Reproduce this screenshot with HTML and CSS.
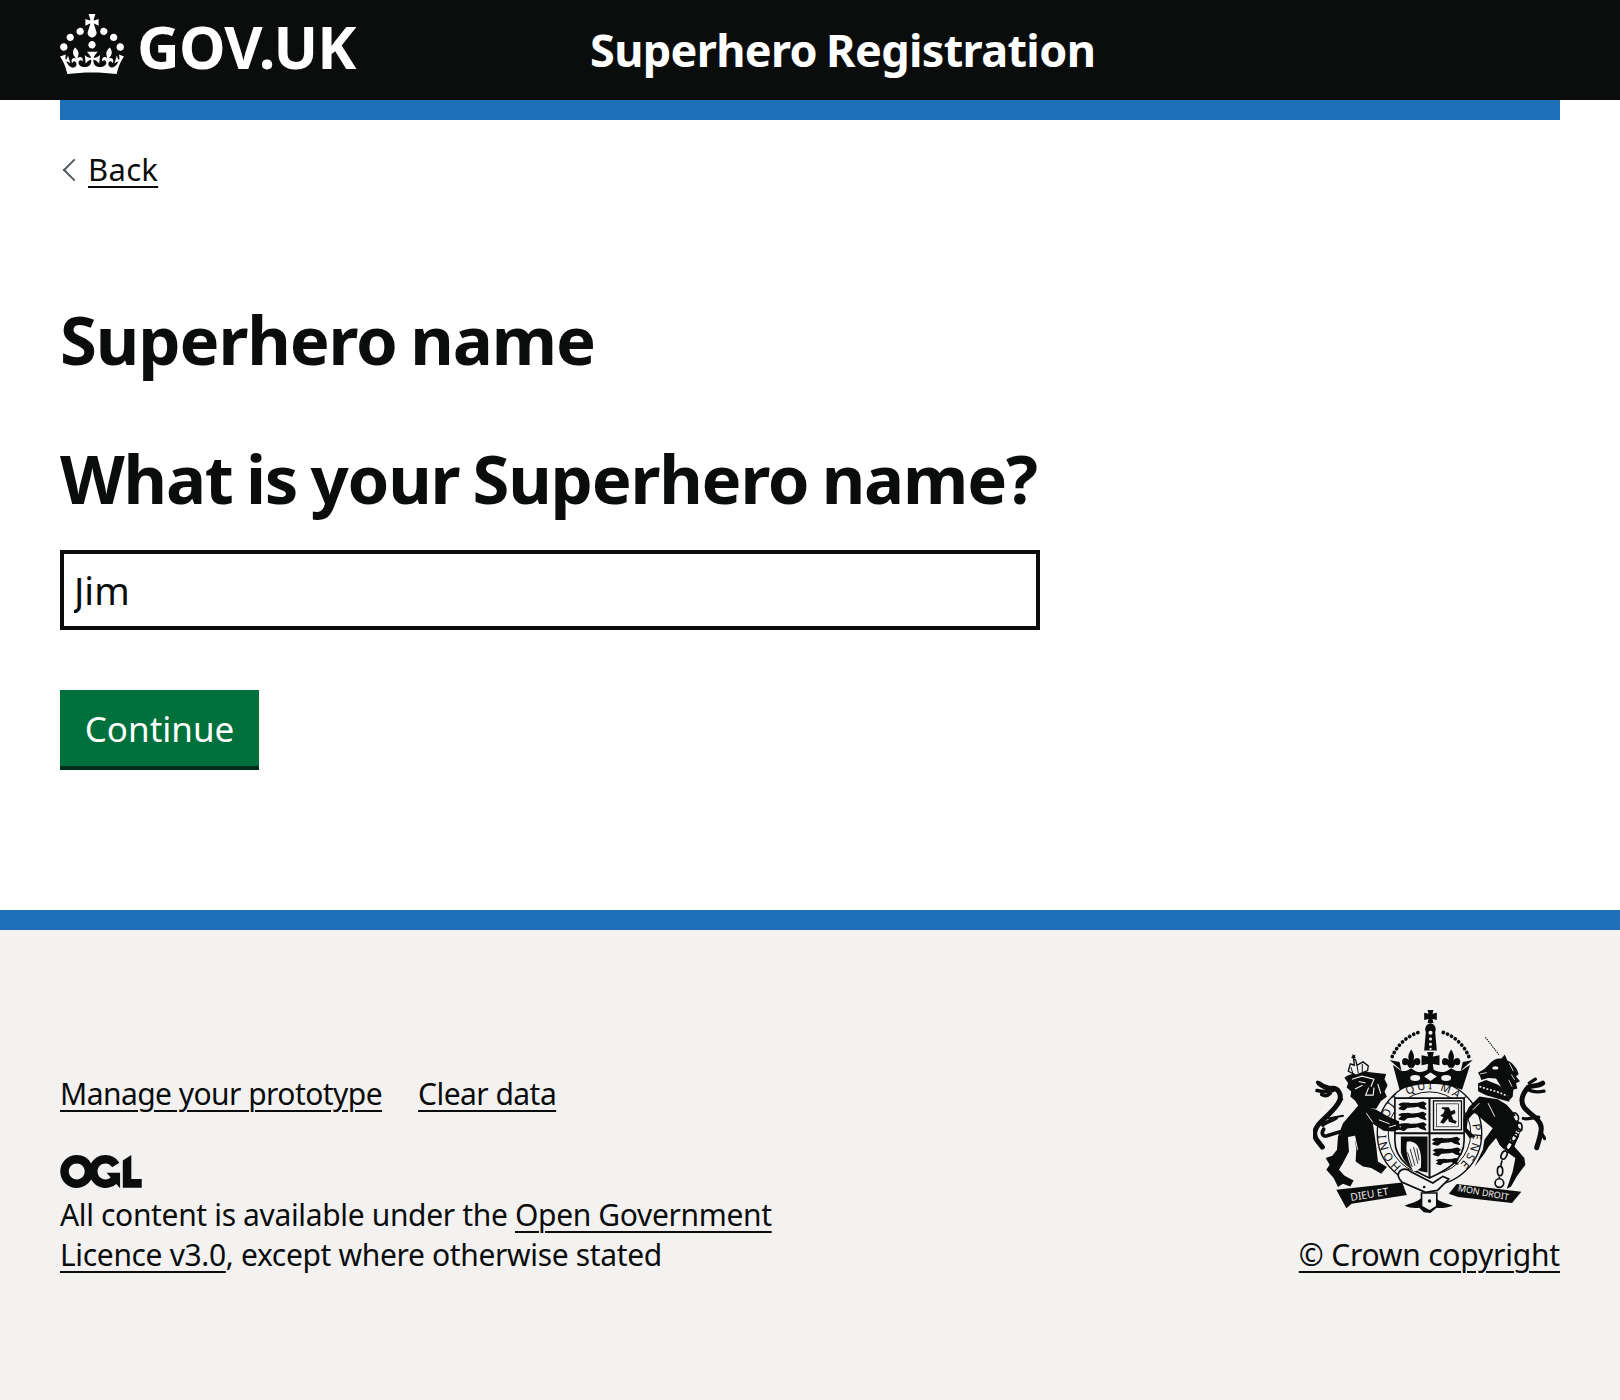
FILE: index.html
```html
<!DOCTYPE html>
<html lang="en">
<head>
<meta charset="utf-8">
<title>Superhero name</title>
<link rel="stylesheet" href="styles.css">
</head>
<body>
<header class="header">
  <div class="header-inner">
    <a class="logo" href="#">
      <svg class="crown" viewBox="0 0 32 30" aria-hidden="true"><path fill="currentColor" d="M22.6 10.4c-1 .4-2-.1-2.4-1-.4-.9.1-2 1-2.4.9-.4 2 .1 2.4 1s-.1 2-1 2.4m-5.9 6.7c-.9.4-2-.1-2.4-1-.4-.9.1-2 1-2.4.9-.4 2 .1 2.4 1s-.1 2-1 2.4m10.8-3.7c-1 .4-2-.1-2.4-1-.4-.9.1-2 1-2.4.9-.4 2 0 2.4 1s0 2-1 2.4m3.3 4.8c-1 .4-2-.1-2.4-1-.4-.9.1-2 1-2.4.9-.4 2-.1 2.4 1 .4 1 0 2-1 2.4M17 4.7l2.3 1.2V2.5l-2.3.7-.2-.2.9-3h-3.4l.9 3-.2.2c-.1.1-2.3-.7-2.3-.7v3.4L15 4.7c.1.1.1.2.2.2l-1.3 4c-.1.2-.1.4-.1.6 0 1.1.8 2 1.9 2.2h.7c1-.2 1.9-1.1 1.9-2.2 0-.2 0-.4-.1-.6l-1.3-4c-.1-.1 0-.2.1-.2m-7.6 5.7c.9.4 2-.1 2.4-1 .4-.9-.1-2-1-2.4-.9-.4-2 .1-2.4 1s0 2 1 2.4m-5 3c.9.4 2-.1 2.4-1 .4-.9-.1-2-1-2.4-.9-.4-2 .1-2.4 1s.1 2 1 2.4m-3.2 4.8c.9.4 2-.1 2.4-1 .4-.9-.1-2-1-2.4-.9-.4-2 .1-2.4 1s0 2 1 2.4m14.8 11c4.4 0 8.6.3 12.3.8 1.1-4.5 2.4-7 3.7-8.8l-2.5-.9c.2 1.3.3 1.9 0 2.7-.4-.4-.8-1.1-1.1-2.3l-1.2 4c.7-.5 1.3-.8 2-.9-1.1 2.5-2.6 3.1-3.5 3-1.1-.2-1.7-1.2-1.5-2.1.3-1.2 1.5-1.5 2.1-.1 1.1-2.3-.8-3-2-2.3 1.9-1.9 2.1-3.5.6-5.6-2.1 1.6-2.1 3.2-1.2 5.5-1.2-1.4-3.2-.6-2.5 1.6.9-1.4 2.1-.5 1.9.8-.2 1.1-1.7 2.1-3.5 1.9-2.7-.2-2.9-2.1-2.9-3.6.7-.1 1.9.5 2.9 1.9l.4-4.3c-1.1 1.1-2.1 1.4-3.2 1.4.4-1.2 2.1-3 2.1-3h-5.4s1.7 1.9 2.1 3c-1.1 0-2.1-.2-3.2-1.4l.4 4.3c1-1.4 2.2-2 2.9-1.9-.1 1.5-.2 3.4-2.9 3.6-1.9.2-3.4-.8-3.5-1.9-.2-1.3 1-2.2 1.9-.8.7-2.3-1.2-3-2.5-1.6.9-2.2.9-3.9-1.2-5.5-1.5 2-1.3 3.7.6 5.6-1.2-.7-3.1 0-2 2.3.6-1.4 1.8-1.1 2.1.1.2.9-.3 1.9-1.5 2.1-.9.2-2.4-.5-3.5-3 .6 0 1.2.3 2 .9l-1.2-4c-.3 1.1-.7 1.9-1.1 2.3-.3-.8-.2-1.4 0-2.7l-2.9.9C1.3 23 2.6 25.5 3.7 30c3.7-.5 7.9-.8 12.3-.8"/></svg>
      <span class="logo-text">GOV.UK</span>
    </a>
    <a class="service" href="#">Superhero Registration</a>
  </div>
</header>
<div class="container">
  <div class="rule"></div>
  <a class="back" href="#"><span class="back-text">Back</span></a>
  <main class="main">
    <h1 class="title">Superhero name</h1>
    <label class="label" for="name">What is your Superhero name?</label>
    <input class="input" id="name" type="text" value="Jim">
    <button class="button" type="button">Continue</button>
  </main>
</div>
<footer class="footer">
  <div class="footer-inner">
    <div class="footer-meta">
      <ul class="footer-links">
        <li><a href="#">Manage your prototype</a></li>
        <li><a href="#">Clear data</a></li>
      </ul>
      <svg class="ogl" viewBox="0 0 483.2 195.7" aria-hidden="true"><path fill="currentColor" d="M421.5 142.8V.1l-50.7 32.3v161.1h112.4v-50.7zm-122.3-9.6A47.12 47.12 0 0 1 221 97.8c0-26 21.1-47.1 47.1-47.1 16.7 0 31.4 8.7 39.7 21.8l42.7-27.2A97.63 97.63 0 0 0 268.1 0c-36.5 0-68.3 20.1-85.1 49.7A98 98 0 0 0 97.8 0C43.9 0 0 43.9 0 97.8s43.9 97.8 97.8 97.8c36.5 0 68.3-20.1 85.1-49.7a97.76 97.76 0 0 0 149.6 25.4l19.4 22.2h3v-87.8h-80l24.3 27.5zM97.8 145c-26 0-47.1-21.1-47.1-47.1s21.1-47.1 47.1-47.1 47.2 21 47.2 47S123.8 145 97.8 145"/></svg>
      <p class="licence">All content is available under the <a href="#">Open Government Licence v3.0</a>, except where otherwise stated</p>
    </div>
    <div class="footer-crest">
      <svg class="crest" viewBox="70 60 700 610" aria-hidden="true">
        <defs>
          <path id="fleur" d="M0-30C8-18 8-10 5-4 12-12 22-12 22 0 22 8 14 10 10 6L5 14H-5L-10 6C-14 10-22 8-22 0-22-12-12-12-5-4-8-10-8-18 0-30Z"/>
          <path id="lion-passant" stroke="#0b0c0c" stroke-width="4" stroke-linejoin="round" d="M0 10C10 3 20 8 26 6 40 10 60 6 72 3L80 8 74 14 80 24 66 20 56 14C44 18 34 16 24 18L14 26 0 22 10 14Z"/>
          <path id="garter-ring" d="M336 530A131 131 0 1 1 504 530"/>
          <path id="ribbon-l" d="M184 634L334 610"/>
          <path id="ribbon-r" d="M504 604L668 634"/>
        </defs>

        <!-- garter -->
        <circle cx="420" cy="430" r="157" fill="#f3f2f1" stroke="#0b0c0c" stroke-width="4"/>
        <circle cx="420" cy="430" r="124" fill="none" stroke="#0b0c0c" stroke-width="3"/>
        <text class="crest-motto" font-size="34"><textPath href="#garter-ring" textLength="630" lengthAdjust="spacing">HONI SOIT QUI MAL Y PENSE</textPath></text>

        <!-- royal crown -->
        <g transform="translate(270 30)" fill="#0b0c0c">
          <path d="M144 29h18l-3 12 13-3v22l-13-3 3 12h-18l3-12-13 3V38l13 3z"/>
          <path d="M134 152l5-56c-6-10 3-26 14-26s20 16 14 26l5 56z"/>
          <g fill="#f3f2f1">
            <circle cx="153" cy="98" r="6"/><circle cx="153" cy="117" r="4.5"/><circle cx="153" cy="133" r="4.5"/><circle cx="153" cy="147" r="3.5"/>
          </g>
          <path d="M38 170C52 136 85 105 122 96M268 170C255 136 222 105 186 96" fill="none" stroke="#0b0c0c" stroke-width="11" stroke-linecap="round" stroke-dasharray="0.5 13"/>
          <use href="#fleur" transform="translate(95 186) scale(1.25)"/>
          <use href="#fleur" transform="translate(215 186) scale(1.25)"/>
          <path d="M143 156h20l-3 14 20-4v30l-20-4 3 22h-20l3-22-20 4v-30l20 4z"/>
          <path d="M30 180l30 6 6 26zM280 180l-30 6-6 26z"/>
          <path d="M40 195C60 205 65 225 95 205 120 225 130 215 153 205 175 215 190 225 215 205 245 225 250 205 272 195L248 270C195 246 115 246 60 270Z"/>
          <g fill="#f3f2f1">
            <ellipse cx="107" cy="234" rx="15" ry="9"/>
            <path d="M153 218l19 12-19 13-19-13z"/>
            <ellipse cx="200" cy="234" rx="15" ry="9"/>
          </g>
        </g>

        <!-- shield -->
        <path d="M316 325h208v128c0 62-60 92-104 112-44-20-104-50-104-112z" fill="#f3f2f1" stroke="#0b0c0c" stroke-width="5"/>
        <path d="M420 325v240M316 430h208" stroke="#0b0c0c" stroke-width="6"/>
        <g fill="#0b0c0c">
          <use href="#lion-passant" transform="translate(329 334)"/>
          <use href="#lion-passant" transform="translate(329 365)"/>
          <use href="#lion-passant" transform="translate(329 396)"/>
          <use href="#lion-passant" transform="translate(430 440)"/>
          <use href="#lion-passant" transform="translate(432 472)"/>
          <use href="#lion-passant" transform="scale(.8) translate(552 630)"/>
          <path d="M334 440h80v108c-30-4-68-16-80-60z"/>
        </g>
        <path d="M352 456c28-6 48 18 42 78-8 6-12 10-22 12-12-22-26-56-20-90z" fill="#f3f2f1"/>
        <path d="M362 478l14 50M372 472l13 50M354 488l14 44M382 476l7 36" stroke="#0b0c0c" stroke-width="2.5"/>
        <rect x="432" y="333" width="84" height="87" fill="#f3f2f1" stroke="#0b0c0c" stroke-width="4"/>
        <rect x="441" y="342" width="66" height="69" fill="none" stroke="#0b0c0c" stroke-width="2"/>
        <path d="M458 352h20l6 12 12-4 2 10-12 6 6 14 10 4-4 8-20-6-2-10-14 16-10-4 10-16-10-4 10-8 4-10-10-4z" fill="#0b0c0c"/>

        <!-- lion -->
        <g transform="translate(60 180)">
          <g fill="none" stroke="#0b0c0c" stroke-linecap="round" stroke-linejoin="round">
            <path d="M30 102C42 112 52 114 64 116 86 112 96 134 90 152 80 176 52 198 30 220 12 240 10 258 24 274L38 292" stroke-width="15"/>
            <path d="M24 98L46 112M22 122C40 126 52 126 70 122M36 134C46 140 54 138 62 130M80 204C64 216 46 216 40 226M42 238C34 250 38 262 52 258 64 254 76 250 92 246" stroke-width="11"/>
            <path d="M98 148L64 188M100 198L56 206" stroke-width="6"/>
          </g>
          <path fill="#0b0c0c" d="M148 165L200 180 235 200 268 214 272 238 250 245 222 243 190 222 200 290 205 335 232 352 215 372 185 355 160 350 138 335 140 300 135 258 115 262 118 305 100 340 88 360 105 378 132 392 122 410 100 402 85 412 72 385 50 360 60 345 48 325 68 318 82 300 85 260 100 220Z"/>
          <g transform="translate(168 120) scale(1.14) translate(-168 -120)">
            <path fill="#0b0c0c" d="M112 88C130 74 150 76 168 72L222 78 218 92 226 108 218 124 224 138 208 150 196 170 170 168 150 164 140 148 128 138 130 124 118 114 122 102Z"/>
            <path fill="none" stroke="#f3f2f1" stroke-width="3" d="M132 92L158 84 190 92 182 112M150 98L168 102M176 114L168 134 188 134 190 114M140 118L160 108M200 104L208 130"/>
          </g>
          <path fill="none" stroke="#f3f2f1" stroke-width="3" d="M170 190L190 218M208 210L240 222M238 232L260 226M135 258L144 300"/>
          <path fill="#f3f2f1" stroke="#0b0c0c" stroke-width="4" d="M116 64L122 42 134 46 132 28 138 30 142 46 160 36 176 48 174 62 140 76Z"/>
          <path fill="#0b0c0c" d="M129 12l4 4 4-2-1 6 3 4-6 2-1 6-3-7-5-2 4-4z"/>
          <path fill="none" stroke="#0b0c0c" stroke-width="3" d="M142 46L146 70M158 42L158 68M124 52L130 72"/>
        </g>

        <!-- unicorn -->
        <g transform="translate(420 120)">
          <path d="M168 22L208 74" fill="none" stroke="#0b0c0c" stroke-width="3.5" stroke-dasharray="4 3"/>
          <path fill="#0b0c0c" d="M146 128C160 122 172 112 182 100 192 88 204 84 216 86L226 74 234 92C246 96 262 112 268 132L260 140 272 154 260 160 264 176 252 180 250 200 240 212 236 186 216 172 200 146 176 144 156 150 152 140Z"/>
          <ellipse cx="198" cy="114" rx="9" ry="5" fill="#f3f2f1"/>
          <path d="M152 132L172 128" stroke="#f3f2f1" stroke-width="2.5"/>
          <g fill="none" stroke="#f3f2f1" stroke-width="2.5"><path d="M240 100L252 124M246 134L256 150M238 150L248 170"/></g>
          <path fill="#0b0c0c" d="M146 160L170 150 204 164 238 184 240 216 204 206 170 196 146 184Z"/>
          <path fill="none" stroke="#f3f2f1" stroke-width="5" stroke-dasharray="6 5" d="M150 170L176 178 204 186 234 198"/>
          <path fill="#0b0c0c" d="M118 232L150 200 205 208 232 225 258 255 278 290 268 320 255 350 285 385 288 405 262 440 245 470 232 478 250 425 258 385 230 365 210 345 200 325 178 350 165 372 135 412 160 360 165 330 190 295 160 270 135 248 115 270 112 295 138 322 120 325 102 300 102 265Z"/>
          <path fill="none" stroke="#f3f2f1" stroke-width="3" d="M176 220L196 260M150 220L130 240"/>
          <g fill="none" stroke="#0b0c0c" stroke-linecap="round" stroke-linejoin="round">
            <path d="M340 160C326 170 310 166 296 172 282 190 270 210 284 232 300 254 336 268 336 296 334 320 326 340 322 354" stroke-width="15"/>
            <path d="M344 184C324 188 306 186 294 178M282 266C296 270 310 262 328 262M334 306L346 326M300 160L318 148" stroke-width="10"/>
          </g>
          <g fill="none" stroke="#f3f2f1" stroke-width="11">
            <path d="M258 258L274 292 255 322 226 368" stroke-dasharray="18 6"/>
          </g>
          <g fill="none" stroke="#0b0c0c" stroke-width="5">
            <ellipse cx="258" cy="262" rx="9" ry="13" transform="rotate(-20 258 262)"/>
            <ellipse cx="270" cy="292" rx="8" ry="13"/>
            <ellipse cx="256" cy="322" rx="8" ry="13" transform="rotate(30 256 322)"/>
            <ellipse cx="240" cy="348" rx="8" ry="13" transform="rotate(30 240 348)"/>
            <ellipse cx="224" cy="376" rx="8" ry="13" transform="rotate(25 224 376)"/>
            <ellipse cx="212" cy="424" rx="8" ry="14"/>
            <circle cx="210" cy="460" r="13"/>
            <path d="M218 392L214 408M210 440L210 446"/>
          </g>
        </g>

        <!-- motto -->
        <path d="M140 600L338 578 352 616 186 642 170 656Z" fill="#0b0c0c"/>
        <path d="M502 583L696 606 668 640 506 622 478 612Z" fill="#0b0c0c"/>
        <path d="M345 648C365 640 381 638 395 626H437C451 636 471 642 491 648 467 656 455 656 441 654L423 670 403 668 389 654C373 656 359 654 345 648Z" fill="#0b0c0c"/>
        <path d="M396 610H442V650L420 664 396 650Z" fill="#f3f2f1" stroke="#0b0c0c" stroke-width="5"/>
        <path d="M328 548C338 532 356 538 364 546L430 580 460 560 478 568 444 602 408 608 338 578C330 570 322 560 328 548Z" fill="#f3f2f1" stroke="#0b0c0c" stroke-width="5"/>
        <circle cx="404" cy="592" r="4" fill="#0b0c0c"/>
        <circle cx="420" cy="634" r="5" fill="#0b0c0c"/>
        <text class="crest-ribbon" font-size="31"><textPath href="#ribbon-l">DIEU ET</textPath></text>
        <text class="crest-ribbon" font-size="27"><textPath href="#ribbon-r">MON DROIT</textPath></text>
      </svg>
      <a class="copyright" href="#">© Crown copyright</a>
    </div>
  </div>
</footer>
</body>
</html>
```
FILE: styles.css
```css
* { box-sizing: border-box; }
html, body { margin: 0; height: 100%; }
body {
  display: flex;
  flex-direction: column;
  min-height: 1400px;
  font-family: "Noto Sans", "Open Sans", sans-serif;
  color: #0b0c0c;
  background: #fff;
}
a { color: inherit; text-decoration: underline; text-decoration-thickness: 2px; text-underline-offset: 5px; }

.header { background: #0b0c0c; color: #fff; height: 100px; flex: none; }
.header-inner { display: flex; align-items: flex-start; padding: 0 60px; height: 100%; }
.logo { display: flex; align-items: flex-start; color: #fff; text-decoration: none; width: 530px; flex: none; padding-top: 14px; gap: 13px; }
.crown { width: 64px; height: 60px; display: block; flex: none; }
.logo-text { font-size: 59px; font-weight: 700; line-height: 64px; letter-spacing: -0.8px; }
.service { color: #fff; text-decoration: none; font-size: 45px; font-weight: 700; line-height: 100px; letter-spacing: -0.65px; word-spacing: -2px; }

.container { padding: 0 60px; flex: none; }
.rule { height: 20px; background: #1d70b8; }
.back { display: inline-flex; align-items: center; margin-top: 29px; padding-left: 28px; position: relative; font-size: 31px; line-height: 40px; letter-spacing: 0.3px; text-decoration: none; }
.back::before {
  content: "";
  position: absolute;
  left: 6px;
  top: 13px;
  width: 14px;
  height: 14px;
  border-left: 2px solid #505a5f;
  border-bottom: 2px solid #505a5f;
  transform: rotate(45deg);
}
.back-text { text-decoration: underline; text-decoration-thickness: 2px; text-underline-offset: 5px; }

.main { display: flex; flex-direction: column; align-items: flex-start; padding-top: 110px; height: 721px; }
.title { margin: 0 0 59px; font-size: 67px; line-height: 80px; font-weight: 700; letter-spacing: -1.1px; word-spacing: -3px; }
.label { font-size: 67px; line-height: 80px; font-weight: 700; margin-bottom: 32px; letter-spacing: -1.2px; word-spacing: -3px; }
.input {
  width: 980px;
  height: 80px;
  border: 4px solid #0b0c0c;
  border-radius: 0;
  padding: 10px;
  font: inherit;
  font-size: 38px;
  color: #0b0c0c;
  background: #fff;
  margin-bottom: 60px;
  outline: none;
}
.button {
  width: 199px;
  height: 80px;
  border: 0;
  border-radius: 0;
  background: #00703c;
  box-shadow: inset 0 -4px 0 #002d18;
  color: #fff;
  font: inherit;
  font-size: 35px;
  padding: 0 0 4px;
}

.footer { flex: 1; background: #f3f2f1; border-top: 20px solid #1d70b8; padding: 80px 60px 0; }
.footer-inner { display: flex; justify-content: space-between; align-items: flex-end; }
.footer-meta { width: 760px; }
.footer-links { list-style: none; display: flex; gap: 36px; margin: 0 0 41px; padding: 0; font-size: 30px; line-height: 40px; letter-spacing: -0.55px; }
.ogl { display: block; width: 82px; height: 33px; }
.licence { margin: 7px 0 0; font-size: 30px; line-height: 40px; letter-spacing: -0.35px; }
.footer-crest { display: flex; flex-direction: column; align-items: flex-end; }
.crest { display: block; width: 233px; height: 203px; margin: 0 14px 22px 0; }
.copyright { font-size: 30px; line-height: 40px; letter-spacing: -0.2px; }
.crest-motto, .crest-ribbon { font-family: "Noto Sans", sans-serif; }
.crest-motto { fill: #0b0c0c; }
.crest-ribbon { fill: #f3f2f1; }
```
